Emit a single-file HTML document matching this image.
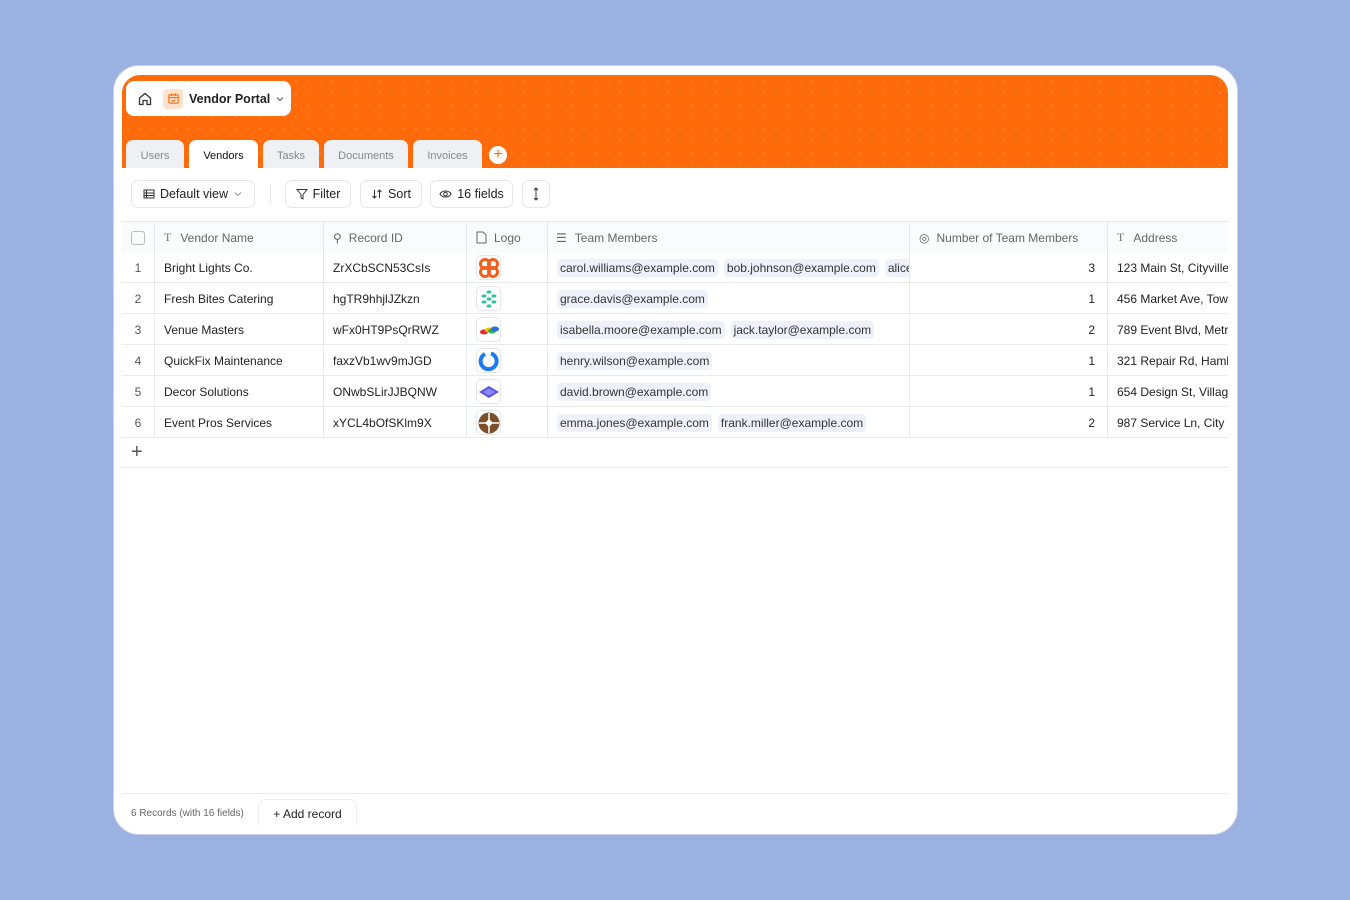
<!DOCTYPE html>
<html><head><meta charset="utf-8"><style>
*{box-sizing:border-box;margin:0;padding:0}
body{width:1350px;height:900px;background:#9bb1e1;font-family:"Liberation Sans",sans-serif;position:relative;overflow:hidden;color:#222}
.card{position:absolute;left:113px;top:65px;width:1125px;height:770px;background:#fff;border-radius:26px;border:1px solid #c9d3ea}
.panel{position:absolute;left:122px;top:75px;width:1106px;height:750px;background:#fff;border-radius:18px 18px 0 0;overflow:hidden}
.hdr{position:absolute;left:0;top:0;width:1106px;height:93px;background-color:#ff6b0a;background-image:radial-gradient(circle,rgba(255,190,140,.45) 0.6px,transparent 1px);background-size:12px 12px}
.portal{position:absolute;left:4px;top:6px;width:165px;height:35px;background:#fff;border-radius:8px;font-weight:bold;font-size:12.5px;display:flex;align-items:center}
.tab{position:absolute;top:65px;height:28px;padding-top:3px;background:#eef0f3;border-radius:7px 7px 0 0;font-size:11px;color:#888;display:flex;align-items:center;justify-content:center}
.tab.on{background:#fff;color:#111;font-weight:500}
.btn{position:absolute;top:105px;height:28px;border:1px solid #e4e6ea;border-radius:7px;font-size:12.5px;display:flex;align-items:center;justify-content:center;gap:5px;color:#222}
.abs{position:absolute}
.row{position:absolute;left:0;width:1106px;height:31px;border-bottom:1px solid #e8e9ec;font-size:12px}
.c{position:absolute;top:0;height:31px;display:flex;align-items:center;border-right:1px solid #e8e9ec;white-space:nowrap;overflow:hidden}
.hd .c{color:#666;font-size:12px;background:#fafbfc;height:31px}
.chip{background:#edf2fa;border-radius:4px;padding:2px 3px;margin-right:6px;font-size:12px;color:#333}
.logo{width:25px;height:25px;border:1px solid #e4e6ea;border-radius:5px;display:flex;align-items:center;justify-content:center}
</style></head><body>
<div class="card"></div>
<div class="panel">
<div class="hdr">
 <div class="portal">
  <svg style="margin-left:11px" width="16" height="16" viewBox="0 0 16 16" fill="none" stroke="#333" stroke-width="1.3"><path d="M2.5 7 8 2.5 13.5 7V13.5H10V9.5H6V13.5H2.5Z"/></svg>
  <span style="margin-left:10px;width:20px;height:20px;background:#ffe1cc;border-radius:4px;display:flex;align-items:center;justify-content:center"><svg width="13" height="13" viewBox="0 0 14 14" fill="none" stroke="#ff6b0a" stroke-width="1.2"><rect x="2" y="3" width="10" height="9" rx="1.5"/><path d="M2 6h10M5 1.5v3M9 1.5v3M5 9l1.3 1.2L9 8"/></svg></span>
  <span style="margin-left:6px">Vendor Portal</span>
  <svg style="margin-left:5px" width="10" height="10" viewBox="0 0 10 10" fill="none" stroke="#555"><path d="M2 3.5 5 6.5 8 3.5"/></svg>
 </div>
 <div class="tab" style="left:4px;width:58px">Users</div>
 <div class="tab on" style="left:67px;width:69px">Vendors</div>
 <div class="tab" style="left:141px;width:56px">Tasks</div>
 <div class="tab" style="left:202px;width:84px">Documents</div>
 <div class="tab" style="left:291px;width:69px">Invoices</div>
 <div class="abs" style="left:367px;top:71px;width:18px;height:18px;border-radius:50%;background:#fff;color:#ff6b0a;font-size:16px;line-height:17px;text-align:center">+</div>
</div>
<div class="btn" style="left:9px;width:124px"><svg width="12" height="12" viewBox="0 0 12 12" fill="none" stroke="#333"><rect x="1" y="2" width="10" height="8"/><path d="M1 5h10M1 7.5h10M3.5 2v8"/></svg>Default view<svg width="10" height="10" viewBox="0 0 10 10" fill="none" stroke="#999"><path d="M2 3.5 5 6.5 8 3.5"/></svg></div>
<div class="abs" style="left:148px;top:109px;width:1px;height:20px;background:#e4e6ea"></div>
<div class="btn" style="left:163px;width:66px"><svg width="12" height="12" viewBox="0 0 12 12" fill="none" stroke="#333"><path d="M1 1.5h10L7 6.5V11L5 10V6.5Z"/></svg>Filter</div>
<div class="btn" style="left:238px;width:62px"><svg width="12" height="12" viewBox="0 0 12 12" fill="none" stroke="#333"><path d="M3.5 2v8M1.5 8l2 2 2-2M8.5 10V2M6.5 4l2-2 2 2"/></svg>Sort</div>
<div class="btn" style="left:308px;width:83px"><svg width="13" height="12" viewBox="0 0 13 12" fill="none" stroke="#333"><path d="M1 6c2-4 9-4 11 0-2 4-9 4-11 0Z"/><circle cx="6.5" cy="6" r="1.8"/></svg>16 fields</div>
<div class="btn" style="left:400px;width:28px"><svg width="10" height="14" viewBox="0 0 10 14" fill="none" stroke="#333"><path d="M5 1v12M3 3l2-2 2 2M3 11l2 2 2-2"/></svg></div>

<div class="row hd" style="top:146px;border-top:1px solid #e8e9ec;height:32px">
 <div class="c" style="left:0;width:33px;justify-content:center"><span style="width:14px;height:14px;border:1px solid #bbb;border-radius:3px"></span></div>
 <div class="c" style="left:33px;width:169px;padding-left:9px"><span style="font-family:'Liberation Serif';margin-right:9px;color:#777">T</span>Vendor Name</div>
 <div class="c" style="left:202px;width:143px;padding-left:9px"><span style="margin-right:7px">⚲</span>Record ID</div>
 <div class="c" style="left:345px;width:81px;padding-left:9px"><svg style="margin-right:7px" width="11" height="13" viewBox="0 0 11 13" fill="none" stroke="#666"><path d="M1 1h6l3 3v8H1Z"/></svg>Logo</div>
 <div class="c" style="left:426px;width:362px;padding-left:8px"><span style="margin-right:8px">☰</span>Team Members</div>
 <div class="c" style="left:788px;width:198px;padding-left:9px"><span style="margin-right:7px">◎</span>Number of Team Members</div>
 <div class="c" style="left:986px;width:120px;padding-left:9px;border-right:0"><span style="font-family:'Liberation Serif';margin-right:9px;color:#777">T</span>Address</div>
</div>
<div id="rows"></div>
<div class="row" style="top:363px;height:30px"><div class="abs" style="left:9px;top:3px;font-size:20px;color:#555;font-weight:300">+</div></div>
<div class="abs" style="left:0;top:718px;width:1106px;height:1px;background:#e8e9ec"></div>
<div class="abs" style="left:9px;top:733px;font-size:10px;color:#666">6 Records (with 16 fields)</div>
<div class="abs" style="left:136px;top:724px;width:99px;height:28px;border:1px solid #eee;border-bottom:0;border-radius:7px 7px 0 0;font-size:12px;display:flex;align-items:center;justify-content:center">+ Add record</div>
</div>
<script>
var d=[["Bright Lights Co.","ZrXCbSCN53CsIs",["carol.williams@example.com","bob.johnson@example.com","alice.smith@example.com"],3,"123 Main St, Cityville",'<svg width="22" height="22" viewBox="0 0 22 22" fill="none" stroke="#f2601f" stroke-width="3"><circle cx="7" cy="7" r="4.5"/><circle cx="15" cy="7" r="4.5"/><circle cx="7" cy="15" r="4.5"/><circle cx="15" cy="15" r="4.5"/></svg>'],
["Fresh Bites Catering","hgTR9hhjlJZkzn",["grace.davis@example.com"],1,"456 Market Ave, Town",'<svg width="22" height="22" viewBox="0 0 22 22" fill="#2ec4a0"><ellipse cx="11" cy="4" rx="2.5" ry="1.6"/><ellipse cx="6" cy="8" rx="2.5" ry="1.6"/><ellipse cx="16" cy="8" rx="2.5" ry="1.6"/><ellipse cx="11" cy="11" rx="2.5" ry="1.6"/><ellipse cx="6" cy="14" rx="2.5" ry="1.6"/><ellipse cx="16" cy="14" rx="2.5" ry="1.6"/><ellipse cx="11" cy="18" rx="2.5" ry="1.6"/></svg>'],
["Venue Masters","wFx0HT9PsQrRWZ",["isabella.moore@example.com","jack.taylor@example.com"],2,"789 Event Blvd, Metro",'<svg width="22" height="22" viewBox="0 0 22 22"><ellipse cx="6" cy="13" rx="4" ry="2.5" fill="#e52d2d"/><ellipse cx="11" cy="11" rx="4" ry="2.5" fill="#f5c400"/><ellipse cx="14" cy="12" rx="4" ry="2.5" fill="#2bb34a"/><ellipse cx="17" cy="10" rx="4" ry="2.5" fill="#2d6be5"/></svg>'],
["QuickFix Maintenance","faxzVb1wv9mJGD",["henry.wilson@example.com"],1,"321 Repair Rd, Hamlet",'<svg width="22" height="22" viewBox="0 0 22 22" fill="none" stroke="#1a7bf0" stroke-width="4"><path d="M13 3.5A8 8 0 1 1 7 4"/></svg>'],
["Decor Solutions","ONwbSLirJJBQNW",["david.brown@example.com"],1,"654 Design St, Village",'<svg width="22" height="22" viewBox="0 0 22 22"><path d="M1 11 11 5 21 11 11 17Z" fill="#5a5ae0"/><path d="M5 11 11 7.5 17 11 11 14.5Z" fill="#8a8af5"/></svg>'],
["Event Pros Services","xYCL4bOfSKlm9X",["emma.jones@example.com","frank.miller@example.com"],2,"987 Service Ln, City",'<svg width="22" height="22" viewBox="0 0 22 22"><circle cx="11" cy="11" r="10.5" fill="#7a4f2a"/><path d="M11 1v20M1 11h20" stroke="#fff" stroke-width="1.5"/><path d="M11 7 15 11 11 15 7 11Z" fill="#fff"/></svg>']];
var h="";d.forEach(function(r,i){var t=177+i*31;h+='<div class="row" style="top:'+t+'px"><div class="c" style="left:0;width:33px;justify-content:center;color:#555">'+(i+1)+'</div><div class="c" style="left:33px;width:169px;padding-left:9px">'+r[0]+'</div><div class="c" style="left:202px;width:143px;padding-left:9px">'+r[1]+'</div><div class="c" style="left:345px;width:81px;padding-left:9px"><div class="logo">'+r[5]+'</div></div><div class="c" style="left:426px;width:362px;padding-left:9px">'+r[2].map(function(e){return '<span class="chip">'+e+'</span>'}).join('')+'</div><div class="c" style="left:788px;width:198px;justify-content:flex-end;padding-right:12px">'+r[3]+'</div><div class="c" style="left:986px;width:120px;padding-left:9px;border-right:0">'+r[4]+'</div></div>'});
document.getElementById('rows').outerHTML=h;
</script>
</body></html>
